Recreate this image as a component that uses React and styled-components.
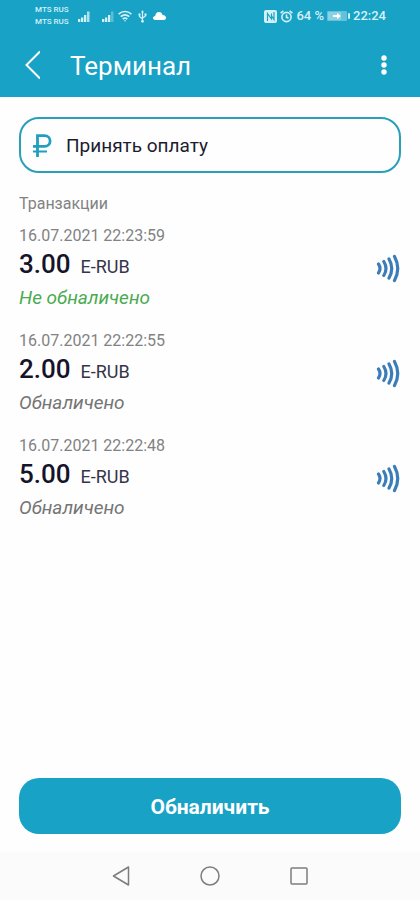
import React from 'react';
import styled, {createGlobalStyle} from 'styled-components';

//-----< Styling >-----\\
const GlobalStyle = createGlobalStyle`
    * {
        box-sizing: border-box;
    }
    body {
        margin: 0;
        background: #fefefe;
        font-family: Roboto, "Liberation Sans", sans-serif;
    }
    button {
        font-family: inherit;
        border: none;
        padding: 0;
        background: none;
        cursor: pointer;
    }
    svg {
        display: block;
        flex: none;
    }
`;

const Screen = styled.div`
    min-height: 100vh;
    display: flex;
    flex-direction: column;
`;

const Header = styled.header`
    background: #18a2c6;
    color: white;
`;

const StatusBar = styled.div`
    display: flex;
    align-items: center;
    justify-content: space-between;
    height: 32px;
    padding: 0 34px 0 35px;
    color: #d5f1f8;
`;

const StatusGroup = styled.div`
    display: flex;
    align-items: center;
    gap: ${props => props.$gap}px;
`;

const SignalGroup = styled.div`
    display: flex;
    gap: 10px;
    margin-right: -3px;
`;

const Carriers = styled.div`
    font-size: 8px;
    line-height: 12px;
    font-weight: 500;
    margin-right: 2px;
`;

const StatusText = styled.span`
    font-size: 13px;
    line-height: 16px;
    font-weight: 500;
`;

const AppBar = styled.div`
    display: flex;
    align-items: center;
    height: 65px;
    padding: 0 20px;
`;

const IconButton = styled.button`
    display: flex;
    align-items: center;
    justify-content: ${props => props.$align};
    width: 32px;
    height: 40px;
    color: white;
`;

const Title = styled.h1`
    flex: 1;
    margin: 0 0 0 18px;
    padding-top: 2px;
    font-size: 26px;
    line-height: 32px;
    font-weight: 400;
`;

const Main = styled.main`
    flex: 1;
    display: flex;
    flex-direction: column;
    padding: 20px 19px 18px;
`;

const PayButton = styled.button`
    display: flex;
    align-items: center;
    gap: 14px;
    height: 56px;
    padding: 2px 11px 0;
    border: 2px solid #299fb9;
    border-radius: 20px;
    color: #1c1c30;
    font-size: 19px;
    line-height: 24px;
`;

const SectionTitle = styled.h2`
    margin: 21px 0 0;
    font-size: 16px;
    line-height: 20px;
    font-weight: 400;
    color: #828282;
`;

const List = styled.ul`
    list-style: none;
    margin: 12px 0 0;
    padding: 0;
    display: flex;
    flex-direction: column;
    gap: 20px;
`;

const Item = styled.li`
    display: flex;
    align-items: center;
    justify-content: space-between;
    padding-right: 1px;
`;

const DateText = styled.div`
    font-size: 16px;
    line-height: 20px;
    color: #828282;
`;

const Amount = styled.div`
    display: flex;
    align-items: baseline;
    gap: 10px;
    margin: 2px 0 4px;
    font-size: 26px;
    line-height: 32px;
    font-weight: 500;
    color: #14142a;
`;

const Currency = styled.span`
    font-size: 18px;
    line-height: 24px;
    font-weight: 400;
    color: #35354a;
`;

const State = styled.div`
    font-size: 19px;
    line-height: 27px;
    font-style: italic;
    color: ${props => props.$pending ? '#4bab50' : '#757575'};
`;

const CashOutButton = styled.button`
    height: 56px;
    margin-top: auto;
    padding-top: 2px;
    border-radius: 20px;
    background: #18a2c6;
    color: white;
    font-size: 21px;
    line-height: 24px;
    font-weight: 700;
`;

const NavBar = styled.nav`
    display: flex;
    align-items: center;
    justify-content: center;
    gap: 57px;
    height: 48px;
    background: #fbfbfb;
`;

const NavButton = styled.button`
    display: flex;
    align-items: center;
    justify-content: center;
    width: 32px;
    height: 32px;
    color: #7d7d7d;
`;


//-----< Icons >-----\\
const SignalIcon = ({weak}) => (
    <svg width="14" height="12" viewBox="0 0 14 12" fill="currentColor">
        <path d="M1 9h2.300v3H1zM4 7.500h2.300V12H4zM7 5h2.300v7H7z" />
        <path d="M10 1.500h2.500V12H10z" opacity={weak ? .35 : .8} />
    </svg>
);

const WifiIcon = () => (
    <svg width="14" height="12" viewBox="0 0 14 12" fill="none" stroke="currentColor" strokeWidth="1.700">
        <path d="M.6 4.200C4.400.6 9.600.6 13.400 4.200M2.700 6.700c2.600-2.300 6-2.300 8.600 0M4.700 9c1.500-1.200 3.100-1.200 4.600 0" />
        <circle cx="7" cy="10.800" r=".8" fill="currentColor" stroke="none" />
    </svg>
);

const UsbIcon = () => (
    <svg width="9" height="13" viewBox="0 0 9 13" fill="none" stroke="currentColor" strokeWidth="1.200">
        <path d="M4.500 2v8.500M1.500 4.500v2l3 2.500M7.500 4v2l-3 2" />
        <path d="M4.500 0l1.500 2.500H3z" fill="currentColor" stroke="none" />
        <circle cx="4.500" cy="11.300" r="1.400" fill="currentColor" stroke="none" />
        <path d="M.5 3.500h2v2h-2zM6.500 3.500h2v2h-2z" fill="currentColor" stroke="none" />
    </svg>
);

const CloudIcon = () => (
    <svg width="13" height="8" viewBox="0 0 13 8" fill="white">
        <path d="M2.500 8C1 8 0 7 0 6s.9-2 2.200-2C2.500 1.500 4 0 6 0c1.800 0 3.100 1.200 3.500 3C11.500 3 13 4.200 13 5.700 13 7 12 8 10.500 8z" />
    </svg>
);

const NfcIcon = () => (
    <svg width="13" height="13" viewBox="0 0 13 13">
        <rect width="13" height="13" rx="2" fill="currentColor" />
        <path d="M3.500 11V3.500L7.500 9V3.500M10 2v7.500L7 5" fill="none" stroke="#18a2c6" strokeWidth="1.200" />
    </svg>
);

const AlarmIcon = () => (
    <svg width="13" height="13" viewBox="0 0 13 13" fill="none" stroke="currentColor" strokeWidth="1.600">
        <circle cx="6.500" cy="7" r="4.600" />
        <path d="M6.500 4.500V7.200l2 1M.6 3.200L3.400.9M12.400 3.200L9.600.9" />
    </svg>
);

const BatteryIcon = () => (
    <svg width="23" height="10" viewBox="0 0 23 10" fill="currentColor">
        <rect width="20" height="10" rx="1" opacity=".4" />
        <rect x="1" y="1" width="13" height="8" opacity=".35" />
        <path d="M6 4h4V2l4 3-4 3V6H6z" fill="white" />
        <rect x="21" y="2" width="2" height="6" rx="1" />
    </svg>
);

const BackIcon = () => (
    <svg width="20" height="30" viewBox="0 0 20 30" fill="none" stroke="currentColor" strokeWidth="2">
        <path d="M20 1.500L6.500 15 20 28.500" />
    </svg>
);

const MoreIcon = () => (
    <svg width="6" height="20" viewBox="0 0 6 20" fill="currentColor">
        <circle cx="3" cy="3" r="2.700" />
        <circle cx="3" cy="10" r="2.700" />
        <circle cx="3" cy="17" r="2.700" />
    </svg>
);

const RubleIcon = () => (
    <svg width="20" height="24" viewBox="0 0 20 24" fill="none" stroke="#209fbe" strokeWidth="2.800">
        <path d="M5.500 23V1.600h7.200a5.300 5.300 0 0 1 0 10.800H1" />
        <path d="M1 17.500h14" strokeWidth="2" />
    </svg>
);

const ContactlessIcon = () => (
    <svg width="24" height="30" viewBox="0 0 24 30" fill="none" stroke="#3a7db8" strokeWidth="3.200" strokeLinecap="round">
        <path d="M2.500 10q3 4.500 0 9M7.800 7.500q4.400 7 0 14M13 5q5.500 9.500 0 19M18.500 2.500q6.500 12 0 24" />
    </svg>
);


//-----< Data >-----\\
const transactions = [
    {date: '16.07.2021 22:23:59', amount: '3.00', pending: true},
    {date: '16.07.2021 22:22:55', amount: '2.00', pending: false},
    {date: '16.07.2021 22:22:48', amount: '5.00', pending: false},
];


//-----< Component Function >-----\\
export default function App(){
    return (
        <Screen>
            <GlobalStyle />
            <Header>
                <StatusBar>
                    <StatusGroup $gap={6}>
                        <Carriers>
                            <div>MTS RUS</div>
                            <div>MTS RUS</div>
                        </Carriers>
                        <SignalGroup>
                            <SignalIcon />
                            <SignalIcon weak />
                        </SignalGroup>
                        <WifiIcon />
                        <UsbIcon />
                        <CloudIcon />
                    </StatusGroup>
                    <StatusGroup $gap={3}>
                        <NfcIcon />
                        <AlarmIcon />
                        <StatusText>64 %</StatusText>
                        <BatteryIcon />
                        <StatusText>22:24</StatusText>
                    </StatusGroup>
                </StatusBar>
                <AppBar>
                    <IconButton type="button" aria-label="Назад" $align="flex-start">
                        <BackIcon />
                    </IconButton>
                    <Title>Терминал</Title>
                    <IconButton type="button" aria-label="Меню" $align="center">
                        <MoreIcon />
                    </IconButton>
                </AppBar>
            </Header>
            <Main>
                <PayButton type="button">
                    <RubleIcon />
                    Принять оплату
                </PayButton>
                <SectionTitle>Транзакции</SectionTitle>
                <List>
                    {transactions.map(item => (
                        <Item key={item.date}>
                            <div>
                                <DateText>{item.date}</DateText>
                                <Amount>
                                    {item.amount}
                                    <Currency>E-RUB</Currency>
                                </Amount>
                                <State $pending={item.pending}>
                                    {item.pending ? 'Не обналичено' : 'Обналичено'}
                                </State>
                            </div>
                            <ContactlessIcon />
                        </Item>
                    ))}
                </List>
                <CashOutButton type="button">Обналичить</CashOutButton>
            </Main>
            <NavBar>
                <NavButton type="button" aria-label="Назад">
                    <svg width="18" height="20" viewBox="0 0 18 20" fill="none" stroke="currentColor" strokeWidth="1.500" strokeLinejoin="round">
                        <path d="M1.500 10L16.500 1v18z" />
                    </svg>
                </NavButton>
                <NavButton type="button" aria-label="Домой">
                    <svg width="20" height="20" viewBox="0 0 20 20" fill="none" stroke="currentColor" strokeWidth="1.500">
                        <circle cx="10" cy="10" r="9" />
                    </svg>
                </NavButton>
                <NavButton type="button" aria-label="Недавние">
                    <svg width="18" height="18" viewBox="0 0 18 18" fill="none" stroke="currentColor" strokeWidth="1.500">
                        <rect x="1" y="1" width="16" height="16" rx="1" />
                    </svg>
                </NavButton>
            </NavBar>
        </Screen>
    )
}
